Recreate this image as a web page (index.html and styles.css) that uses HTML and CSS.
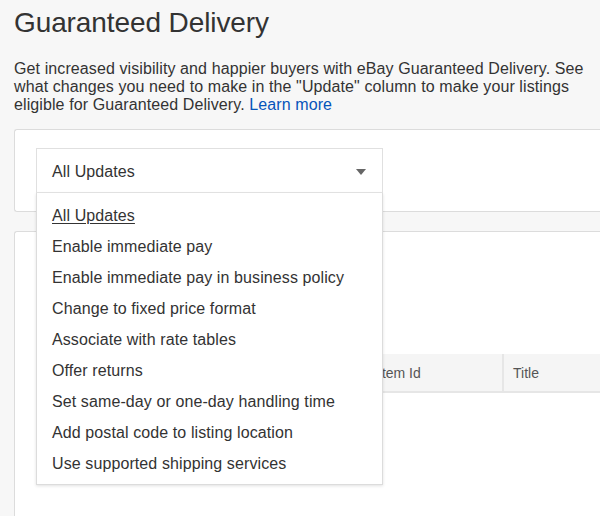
FILE: index.html
```html
<!DOCTYPE html>
<html>
<head>
<meta charset="utf-8">
<link rel="stylesheet" href="styles.css">
</head>
<body>
<div class="page">
  <h1 class="title">Guaranteed Delivery</h1>
  <p class="intro">Get increased visibility and happier buyers with eBay Guaranteed Delivery. See what changes you need to make in the "Update" column to make your listings eligible for Guaranteed Delivery. <a class="link" href="#">Learn more</a></p>

  <section class="card filter-card">
    <div class="dropdown">
      <button class="dd-button" type="button">
        <span>All Updates</span>
        <span class="dd-arrow"></span>
      </button>
      <ul class="dd-menu">
        <li class="dd-item current">All Updates</li>
        <li class="dd-item">Enable immediate pay</li>
        <li class="dd-item">Enable immediate pay in business policy</li>
        <li class="dd-item">Change to fixed price format</li>
        <li class="dd-item">Associate with rate tables</li>
        <li class="dd-item">Offer returns</li>
        <li class="dd-item">Set same-day or one-day handling time</li>
        <li class="dd-item">Add postal code to listing location</li>
        <li class="dd-item">Use supported shipping services</li>
      </ul>
    </div>
  </section>

  <section class="card table-card">
    <div class="table-head">
      <div class="th th-first"></div>
      <div class="th th-id">Item Id</div>
      <div class="th th-title">Title</div>
    </div>
  </section>
</div>
</body>
</html>
```

FILE: styles.css
```css
html, body {
  margin: 0;
  padding: 0;
  background: #f7f7f7;
  height: 100%;
  overflow: hidden;
}

body {
  font-family: Arial, "Liberation Sans", sans-serif;
  color: #333;
}

.page {
  padding-left: 14px;
}

.title {
  margin: 6px 0 0;
  font-size: 28px;
  line-height: 34px;
  font-weight: normal;
  color: #333;
  letter-spacing: -0.1px;
}

.intro {
  margin: 20px 10px 0 0;
  font-size: 16px;
  line-height: 18px;
  color: #333;
  letter-spacing: 0.1px;
}

.link {
  color: #0654ba;
  text-decoration: none;
}

.card {
  background: #fff;
  border: 1px solid #dcdcdc;
  border-right: 0;
  border-radius: 3px 0 0 3px;
}

.filter-card {
  margin-top: 15px;
  padding: 18px 0 18px 21px;
}

.dropdown {
  position: relative;
  width: 347px;
}

.dd-button {
  box-sizing: border-box;
  width: 347px;
  height: 45px;
  display: flex;
  align-items: center;
  justify-content: space-between;
  padding: 2px 16px 0 15px;
  background: #fff;
  border: 1px solid #e0e0e0;
  border-bottom-color: #e6e6e6;
  font-family: inherit;
  font-size: 16px;
  letter-spacing: 0.1px;
  color: #333;
  cursor: pointer;
}

.dd-arrow {
  width: 0;
  height: 0;
  border-left: 5px solid transparent;
  border-right: 5px solid transparent;
  border-top: 6px solid #666;
  margin-top: 0;
}

.dd-menu {
  position: absolute;
  top: 45px;
  left: 0;
  z-index: 2;
  box-sizing: border-box;
  width: 347px;
  margin: 0;
  padding: 7px 0 5px;
  list-style: none;
  background: #fff;
  border: 1px solid #dcdcdc;
  border-top: 0;
  box-shadow: 0 1px 3px rgba(0, 0, 0, 0.12);
}

.dd-item {
  padding-left: 15px;
  height: 31px;
  line-height: 31px;
  font-size: 16px;
  letter-spacing: 0.1px;
  color: #333;
}

.dd-item.current {
  text-decoration: underline;
  text-underline-offset: 2px;
}

.table-card {
  margin-top: 19px;
  height: 180px;
  padding: 122px 0 0 21px;
  border-bottom: 0;
}

.table-head {
  display: flex;
  height: 37px;
  background: #f5f5f5;
  border-bottom: 2px solid #e6e6e6;
  font-size: 14px;
  color: #555;
}

.th {
  box-sizing: border-box;
  display: flex;
  align-items: center;
}

.th-first {
  width: 331px;
}

.th-id {
  width: 137px;
  padding-left: 9px;
  border-left: 2px solid #e6e6e6;
  border-right: 2px solid #e6e6e6;
}

.th-title {
  flex: 1;
  padding-left: 9px;
}
```
